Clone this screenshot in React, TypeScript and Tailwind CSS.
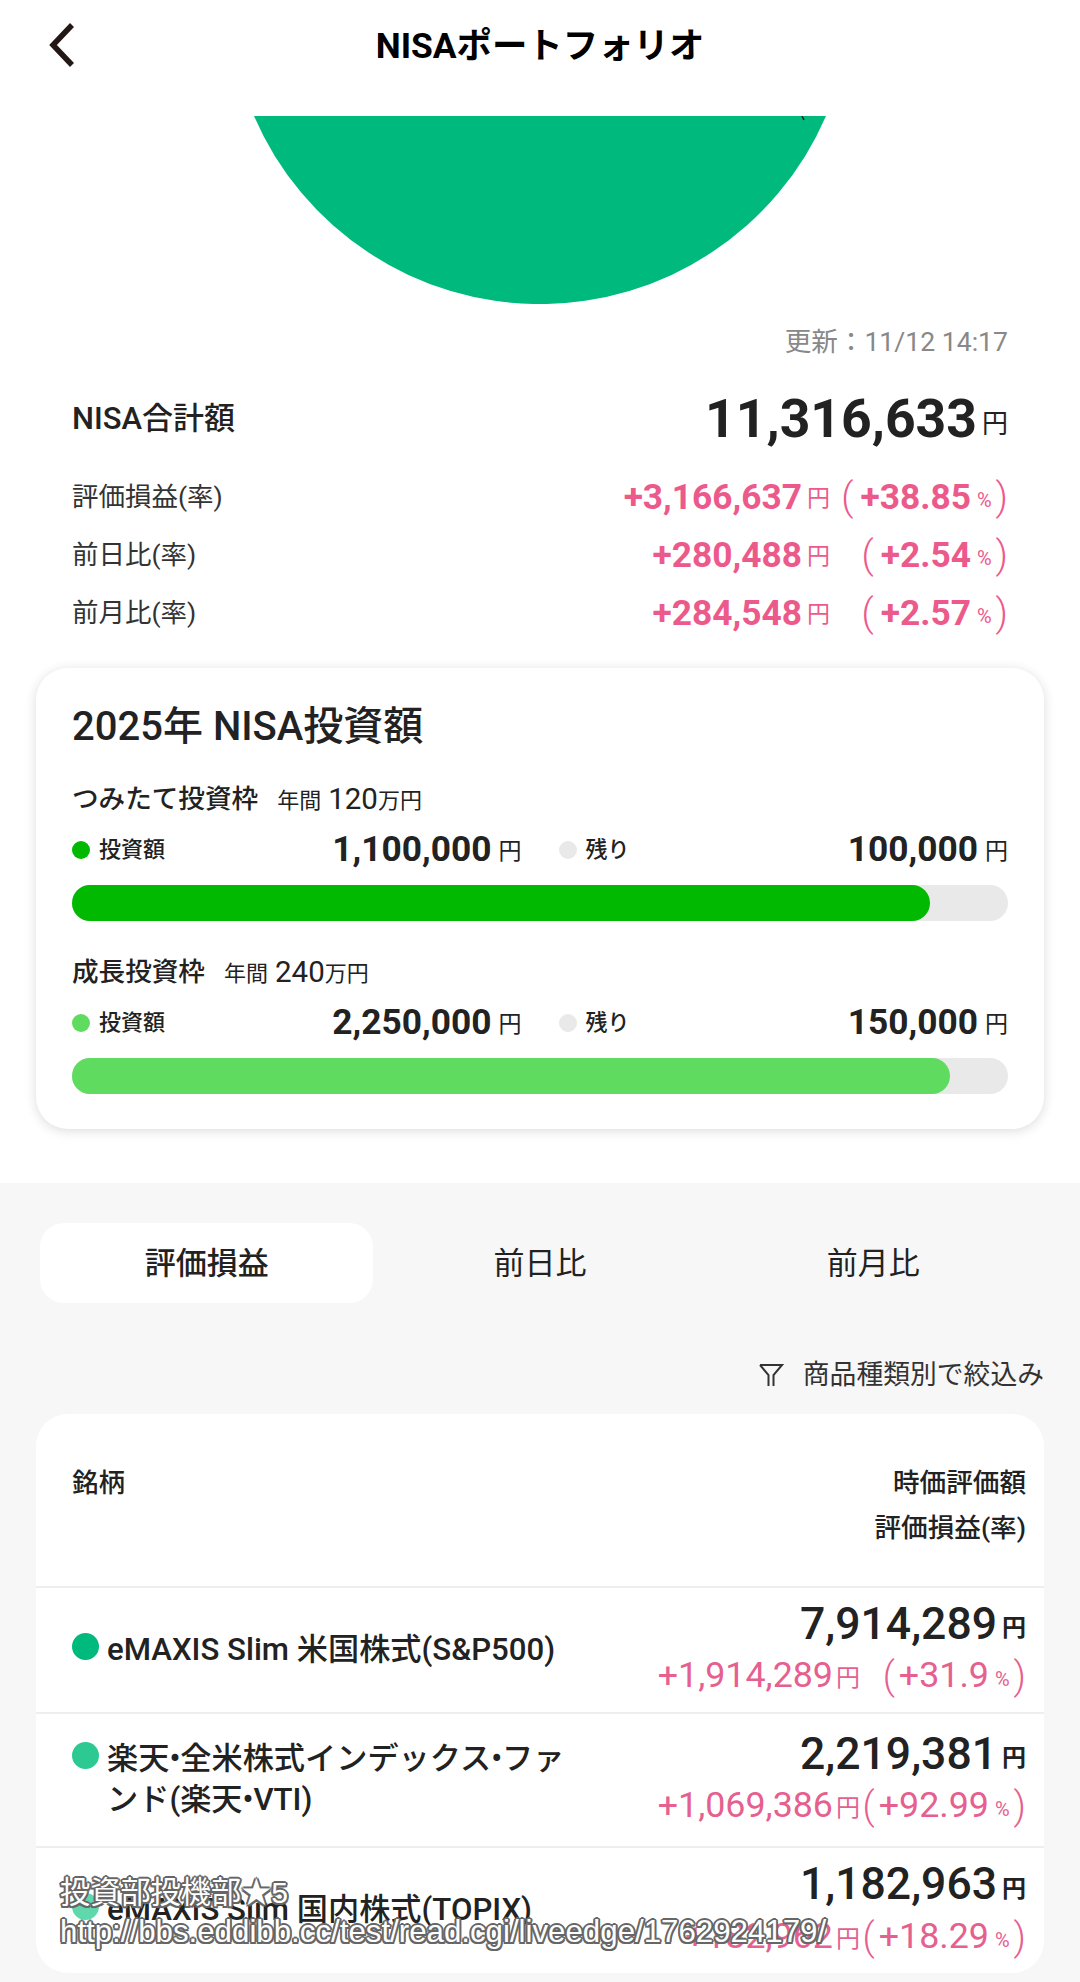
import React from "react";

const PINK = "text-[#ec5a8b]";

function Bar({ pct, color }: { pct: number; color: string }) {
  return (
    <div className="h-[36px] w-full rounded-full bg-[#e9e9e9]">
      <div className={`h-full rounded-full ${color}`} style={{ width: `${pct}%` }} />
    </div>
  );
}

function LegendCell({ dot, label, value }: { dot: string; label: string; value: string }) {
  return (
    <div className="flex flex-1 items-center">
      <span className={`h-[18px] w-[18px] rounded-full ${dot}`} />
      <span className="ml-[9px] text-[22px] font-medium text-[#222]">{label}</span>
      <span className="ml-auto text-[35.3px] font-bold text-[#222]">{value}</span>
      <span className="ml-[7px] mt-[5px] text-[23px] text-[#222]">円</span>
    </div>
  );
}

function Quota({ title, note, amount, rest, dot, bar, pct }: { title: string; note: string; amount: string; rest: string; dot: string; bar: string; pct: number }) {
  return (
    <div>
      <div className="flex h-[30px] items-center text-[#222]">
        <span className="text-[26.6px] font-medium">{title}</span>
        <span className="ml-[19px] mt-[2px] text-[22px]">年間</span>
        <span className="ml-[7px] text-[29.5px]">{note}</span>
        <span className="mt-[2px] text-[22px]">万円</span>
      </div>
      <div className="flex h-[71px] items-center gap-[37px]">
        <LegendCell dot={dot} label="投資額" value={amount} />
        <LegendCell dot="bg-[#e9e9e9]" label="残り" value={rest} />
      </div>
      <Bar pct={pct} color={bar} />
    </div>
  );
}

function SummaryRow({ label, value, rate }: { label: string; value: string; rate: string }) {
  return (
    <div className="flex h-[58px] items-center">
      <span className="text-[26.5px] text-[#333]">{label}</span>
      <span className={`ml-auto text-[35.3px] font-bold ${PINK}`}>{value}</span>
      <span className={`ml-[5px] mt-[4px] text-[23px] ${PINK}`}>円</span>
      <div className={`flex w-[178px] items-center justify-end ${PINK}`}>
        <span className="text-[38px] font-light leading-none">(</span>
        <span className="ml-[7px] text-[35.3px] font-bold">{rate}</span>
        <span className="ml-[6px] mt-[6px] text-[20px]">%</span>
        <span className="ml-[4px] text-[38px] font-light leading-none">)</span>
      </div>
    </div>
  );
}

function HoldingRow({ dot, name, value, gain, rate, h }: { dot: string; name: React.ReactNode; value: string; gain: string; rate: string; h: string }) {
  return (
    <div className={`flex items-center border-t-2 border-[#eeeeee] pl-[36px] pr-[18px] ${h}`}>
      <div className="-mt-[2px] flex items-start">
        <span className={`mt-[4px] h-[27px] w-[27px] shrink-0 rounded-full ${dot}`} />
        <div className="ml-[8px] w-[462px] text-[31.2px] font-medium leading-[41px] text-[#222]">{name}</div>
      </div>
      <div className="ml-auto flex flex-col items-end">
        <div className="flex h-[52px] items-center text-[#222]">
          <span className="text-[44.5px] font-medium">{value}</span>
          <span className="ml-[5px] mt-[8px] text-[24px] font-bold">円</span>
        </div>
        <div className="flex h-[52px] items-center text-[#e5608f]">
          <span className="text-[35.8px]">{gain}</span>
          <span className="ml-[3px] mt-[4px] text-[24px]">円</span>
          <div className="flex w-[166px] items-center justify-end">
            <span className="text-[38px] font-light leading-none">(</span>
            <span className="ml-[4px] text-[35.8px]">{rate}</span>
            <span className="ml-[6px] mt-[6px] text-[20px]">%</span>
            <span className="ml-[4px] text-[38px] font-light leading-none">)</span>
          </div>
        </div>
      </div>
    </div>
  );
}

export default function App() {
  return (
    <div className="relative h-[1982px] w-[1080px] overflow-hidden bg-white [font-family:Roboto,'Noto_Sans_CJK_JP',sans-serif]">
      <header className="grid h-[116px] grid-cols-[1fr_auto_1fr] items-center">
        <svg width="100" height="90" viewBox="0 0 100 90" className="-mt-[26px]">
          <path d="M72 25 L53 45 L72 65" fill="none" stroke="#231815" strokeWidth="5.5" />
        </svg>
        <h1 className="-mt-[22px] text-[35.4px] font-bold text-black">NISAポートフォリオ</h1>
        <div />
      </header>

      <div className="flex h-[188px] justify-center">
        <svg width="572" height="188" viewBox="0 0 572 188">
          <path d="M0 0 A311.5 311.5 0 0 0 572 0 Z" fill="#00b97c" />
          <path d="M548 0 L550 4" stroke="#222" strokeWidth="1.5" />
        </svg>
      </div>

      <section className="px-[72px]">
        <div className="flex h-[74px] items-center justify-end pt-[2px] text-[26.6px] text-[#888888]">更新：11/12 14:17</div>
        <div className="flex h-[82px] items-center text-[#222]">
          <span className="text-[31px] font-medium">NISA合計額</span>
          <span className="ml-auto text-[53.5px] font-bold">11,316,633</span>
          <span className="ml-[5px] mt-[10px] text-[26px]">円</span>
        </div>
        <div className="mt-[8px]">
          <SummaryRow label="評価損益(率)" value="+3,166,637" rate="+38.85" />
          <SummaryRow label="前日比(率)" value="+280,488" rate="+2.54" />
          <SummaryRow label="前月比(率)" value="+284,548" rate="+2.57" />
        </div>
      </section>

      <section className="mx-[36px] mt-[26px] h-[461px] rounded-[32px] bg-white px-[36px] shadow-[0_2px_12px_rgba(0,0,0,0.14)]">
        <h2 className="flex h-[116px] items-center pt-[2px] text-[40px] font-medium text-[#222]">2025年 NISA投資額</h2>
        <Quota title="つみたて投資枠" note="120" amount="1,100,000" rest="100,000" dot="bg-[#00b900]" bar="bg-[#00b900]" pct={91.7} />
        <div className="h-[36px]" />
        <Quota title="成長投資枠" note="240" amount="2,250,000" rest="150,000" dot="bg-[#5fdc5f]" bar="bg-[#5fdc5f]" pct={93.75} />
      </section>

      <section className="mt-[54px] h-[799px] bg-[#f7f7f7] px-[36px] pt-[40px]">
        <div className="mx-[4px] grid h-[80px] grid-cols-3 text-[31px] text-[#222]">
          <div className="flex items-center justify-center rounded-[24px] bg-white pt-[3px] font-medium">評価損益</div>
          <div className="flex items-center justify-center pt-[3px]">前日比</div>
          <div className="flex items-center justify-center pt-[3px]">前月比</div>
        </div>
        <div className="mt-[52px] flex h-[40px] items-center justify-end text-[26.8px] text-[#333]">
          <svg width="26" height="26" viewBox="0 0 26 26" className="mr-[19px]">
            <path d="M2 3 H24 L15.5 13 V24 M2 3 L10.5 13 V24" fill="none" stroke="#333" strokeWidth="2" />
          </svg>
          商品種類別で絞込み
        </div>
        <div className="mt-[19px] h-[559px] overflow-hidden rounded-[32px] bg-white">
          <div className="flex h-[172px] justify-between pl-[36px] pr-[18px] pt-[46px] text-[26.6px] font-medium leading-[45px] text-[#222]">
            <div>銘柄</div>
            <div className="text-right">
              <div>時価評価額</div>
              <div>評価損益(率)</div>
            </div>
          </div>
          <HoldingRow h="h-[126px]" dot="bg-[#00b97c]" name="eMAXIS Slim 米国株式(S&P500)" value="7,914,289" gain="+1,914,289" rate="+31.9" />
          <HoldingRow h="h-[134px]" dot="bg-[#2cc992]" name="楽天•全米株式インデックス•ファンド(楽天•VTI)" value="2,219,381" gain="+1,069,386" rate="+92.99" />
          <HoldingRow h="h-[127px]" dot="bg-[#5fd8ad]" name="eMAXIS Slim 国内株式(TOPIX)" value="1,182,963" gain="+182,962" rate="+18.29" />
        </div>
      </section>

      <div className="pointer-events-none absolute left-[60px] top-[1874px] text-white [font-family:'Liberation_Sans','Noto_Sans_CJK_JP',sans-serif] [text-shadow:2px_0_#666,-2px_0_#666,0_2px_#666,0_-2px_#666,1.5px_1.5px_#666,-1.5px_1.5px_#666,1.5px_-1.5px_#666,-1.5px_-1.5px_#666]">
        <div className="text-[30.2px] leading-[38px]">投資部投機部★5</div>
        <div className="text-[31.25px] leading-[40px]">http://bbs.eddibb.cc/test/read.cgi/liveedge/1762924179/</div>
      </div>
    </div>
  );
}
